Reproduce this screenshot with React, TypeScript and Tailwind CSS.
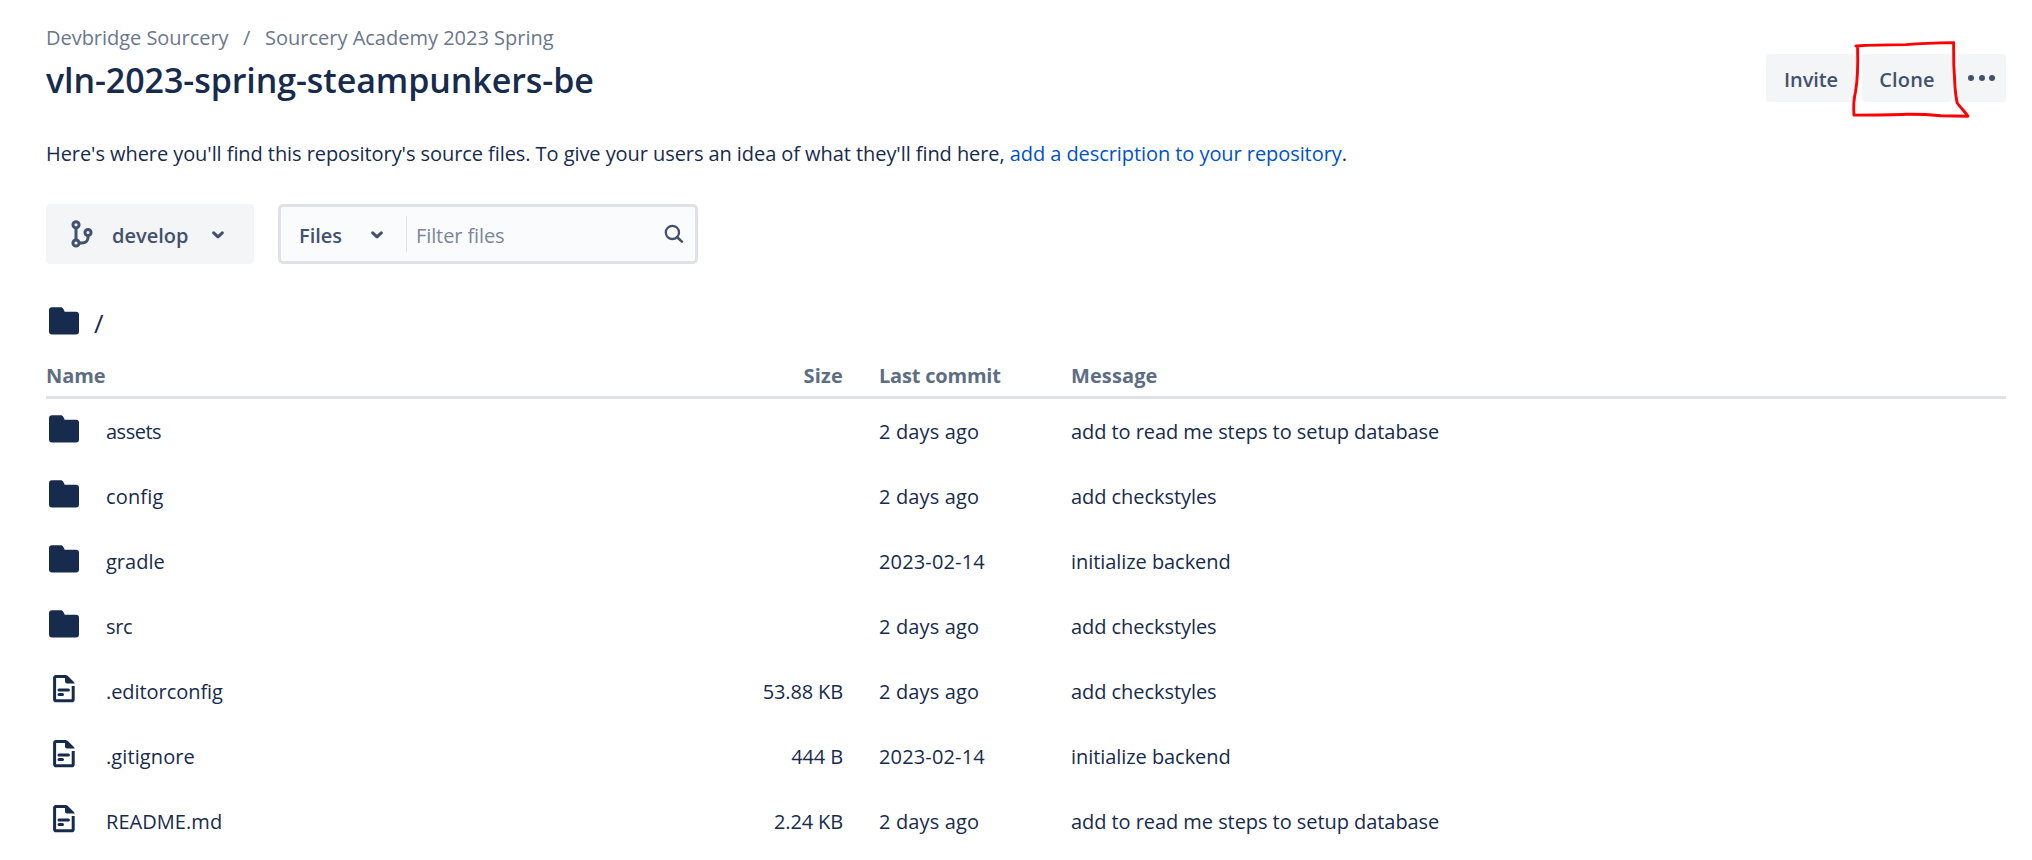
type Entry = {
  kind: "folder" | "file";
  name: string;
  nameClass?: string;
  size?: string;
  commit: string;
  message: string;
};

const entries: Entry[] = [
  { kind: "folder", name: "assets", nameClass: "tracking-[-0.5px]", commit: "2 days ago", message: "add to read me steps to setup database" },
  { kind: "folder", name: "config", nameClass: "tracking-[0.15px]", commit: "2 days ago", message: "add checkstyles" },
  { kind: "folder", name: "gradle", commit: "2023-02-14", message: "initialize backend" },
  { kind: "folder", name: "src", nameClass: "tracking-[-0.3px]", commit: "2 days ago", message: "add checkstyles" },
  { kind: "file", name: ".editorconfig", nameClass: "tracking-[-0.06px]", size: "53.88 KB", commit: "2 days ago", message: "add checkstyles" },
  { kind: "file", name: ".gitignore", nameClass: "tracking-[0.1px]", size: "444 B", commit: "2023-02-14", message: "initialize backend" },
  { kind: "file", name: "README.md", nameClass: "tracking-[0.05px]", size: "2.24 KB", commit: "2 days ago", message: "add to read me steps to setup database" },
];

function FolderIcon() {
  return (
    <svg width="36" height="36" viewBox="0 0 36 36" className="shrink-0" fill="#172b4d">
      <path d="M6 4.2h8.6c1.3 0 2.2.6 2.8 1.7l1.3 2.9H30a3 3 0 0 1 3 3v16.6a3 3 0 0 1-3 3H6a3 3 0 0 1-3-3V7.2a3 3 0 0 1 3-3z" />
    </svg>
  );
}

function FileIcon() {
  return (
    <svg width="36" height="36" viewBox="0 0 36 36" className="shrink-0" fill="none" stroke="#172b4d">
      <path d="M27.2 15v13.2a1.6 1.6 0 0 1-1.6 1.6H10.2a1.6 1.6 0 0 1-1.6-1.6V7.2a1.6 1.6 0 0 1 1.6-1.6H20" strokeWidth="3" />
      <path d="M19 4.2h1.2c.7 0 1.2.2 1.7.7l6 6c.4.4.7.9.8 1.6h-7.7A2 2 0 0 1 19 10.5z" fill="#172b4d" stroke="none" />
      <path d="M13 19h9.4M13 23.5h3.5" strokeWidth="3" strokeLinecap="round" />
    </svg>
  );
}

function BranchIcon() {
  return (
    <svg width="24" height="30" viewBox="0 0 24 30" fill="none" stroke="#42526e" strokeWidth="3">
      <circle cx="6" cy="5.7" r="3.05" />
      <circle cx="6" cy="24" r="3.05" />
      <circle cx="18" cy="13.5" r="3.05" />
      <path d="M6 9v12M9.2 24h2.6c3.6 0 6.2-2 6.2-5.6v-2" />
    </svg>
  );
}

function Chevron() {
  return (
    <svg width="12" height="8" viewBox="0 0 12 8" className="mt-0.5" fill="none" stroke="#42526e" strokeWidth="3" strokeLinecap="round" strokeLinejoin="round">
      <path d="M1.7 1.8 6 5.9l4.3-4.1" />
    </svg>
  );
}

function SearchIcon() {
  return (
    <svg width="20" height="20" viewBox="0 0 20 20" fill="none" stroke="#42526e" strokeWidth="2.3" strokeLinecap="round">
      <circle cx="8.4" cy="8.4" r="6.6" />
      <path d="m13.2 13.2 4.7 4.4" strokeWidth="2.6" />
    </svg>
  );
}

export default function App() {
  return (
    <main className="h-[860px] w-full overflow-hidden bg-white pt-[26px] pr-[26px] pl-[46px] font-['Open_Sans',sans-serif] text-[20px] leading-6 text-[#172b4d]">
      <nav className="flex h-6 items-center text-[#6b778c]">
        <span className="w-[197px] tracking-[-0.03px]">Devbridge Sourcery</span>
        <span className="w-[22px]">/</span>
        <span>Sourcery Academy 2023 Spring</span>
      </nav>

      <header className="flex h-[92px] items-start justify-between">
        <h1 className="mt-[10px] text-[34px] leading-10 font-semibold tracking-[-0.08px]">vln-2023-spring-steampunkers-be</h1>
        <div className="relative mt-1 flex gap-1.5 font-[560] text-[#42526e]">
          <button className="flex h-12 w-[90px] items-center justify-center rounded-[4px] bg-[#f4f5f7] pt-[3px] tracking-[-0.1px]">
            Invite
          </button>
          <button className="flex h-12 w-[90px] items-center justify-center rounded-[4px] bg-[#f4f5f7] pt-[3px] tracking-[0.2px]">
            Clone
          </button>
          <button className="flex h-12 w-12 items-center justify-center gap-[4.5px] rounded-[4px] bg-[#f4f5f7] pr-px">
            <span className="size-1.5 rounded-full bg-[#42526e]" />
            <span className="size-1.5 rounded-full bg-[#42526e]" />
            <span className="size-1.5 rounded-full bg-[#42526e]" />
          </button>
          <svg
            className="pointer-events-none absolute -top-4 left-[84px]"
            width="124"
            height="84"
            viewBox="0 0 124 84"
            fill="none"
            stroke="#ff0000"
            strokeWidth="2.9"
            strokeLinecap="round"
            strokeLinejoin="round"
          >
            <path d="M6 8q18-1.3 50-1.4Q76 5 103.600 4.600q-.3 23 1.400 44 .8 10 2.200 16.400 3 4 6.300 7.500l4.500 5.700-27-.5q-18-1.600-34.500-1.400-16 .8-52.500.8Q3 64 5.500 54 8.400 38 7.600 8.600" />
          </svg>
        </div>
      </header>

      <p className="whitespace-nowrap tracking-[-0.068px]">
        Here's where you'll find this repository's source files. To give your users an idea of what they'll find here,{" "}
        <a className="tracking-[-0.07px] text-[#0052cc]">add a description to your repository</a>.
      </p>

      <div className="mt-[38px] flex h-[60px] gap-6">
        <button className="flex h-[60px] w-[208px] items-center rounded-[4px] bg-[#f4f5f7] pl-6 font-[560] text-[#42526e]">
          <BranchIcon />
          <span className="ml-[18px] w-[100px] pt-[3px] text-left">develop</span>
          <Chevron />
        </button>
        <div className="flex h-[60px] w-[420px] items-center rounded-[5px] border-3 border-[#dfe1e6] bg-[#fafbfc]">
          <span className="ml-[18px] w-[72px] pt-[3px] font-[560] text-[#42526e]">Files</span>
          <Chevron />
          <span className="ml-[23px] h-9 w-px bg-[#dfe1e6]" />
          <span className="ml-[9px] grow pt-[3px] tracking-[-0.1px] text-[#7a869a]">Filter files</span>
          <span className="mr-[11px]">
            <SearchIcon />
          </span>
        </div>
      </div>

      <div className="mt-[39px] flex h-9 items-center">
        <FolderIcon />
        <span className="ml-3 pt-1 text-[26px] leading-9">/</span>
      </div>

      <section className="mt-[17px]">
        <div className="grid h-[43px] grid-cols-[797px_36px_192px_1fr] border-b-3 border-[#dfe1e6] pt-2 font-bold text-[#5e6c84]">
          <span className="flex justify-between">
            <span className="tracking-[-0.1px]">Name</span>
            <span className="tracking-[0.2px]">Size</span>
          </span>
          <span />
          <span className="tracking-[-0.2px]">Last commit</span>
          <span className="tracking-[0.1px]">Message</span>
        </div>
        {entries.map((e) => (
          <div key={e.name} className="grid h-[65px] grid-cols-[60px_737px_36px_192px_1fr] items-center pt-px whitespace-nowrap">
            <span className="-mt-1.5">{e.kind === "folder" ? <FolderIcon /> : <FileIcon />}</span>
            <span className="flex justify-between">
              <span className={e.nameClass}>{e.name}</span>
              <span className="tracking-[-0.14px]">{e.size}</span>
            </span>
            <span />
            <span className="tracking-[0.15px]">{e.commit}</span>
            <span className="tracking-[-0.06px]">{e.message}</span>
          </div>
        ))}
      </section>
    </main>
  );
}
